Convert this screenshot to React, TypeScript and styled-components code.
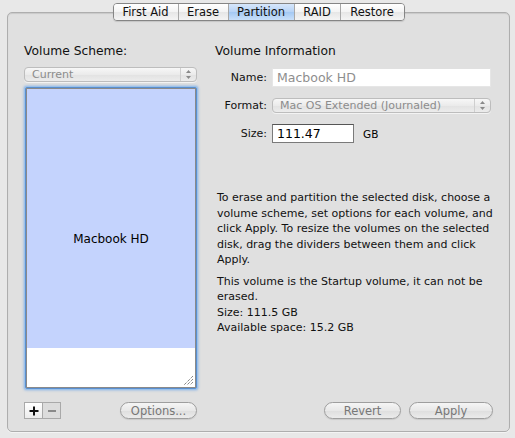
import { createGlobalStyle, styled } from "styled-components";

const GlobalStyle = createGlobalStyle`
    html, body {
        margin: 0;
        padding: 0;
        background: #e8e8e8;
    }
    body {
        font-family: "DejaVu Sans", "Liberation Sans", sans-serif;
        font-size: 11px;
        color: #000;
    }
`;

const Window = styled.div`
    width: 515px;
    height: 438px;
    box-sizing: border-box;
    padding: 3px 5px 0 7px;
    display: flex;
    flex-direction: column;
    background: #e8e8e8;
`;

const TabBar = styled.div`
    display: flex;
    justify-content: center;
    margin: 0 0 -9px 0;
    position: relative;
    z-index: 1;
`;

const Segments = styled.div`
    display: flex;
    height: 16px;
    border: 1px solid #858585;
    border-radius: 4px;
    overflow: hidden;
    box-shadow: 0 1px 1px rgba(0, 0, 0, 0.12);
`;

const Segment = styled.div<{ $active?: boolean; $width: number }>`
    width: ${(p) => p.$width}px;
    display: flex;
    align-items: center;
    justify-content: center;
    font-size: 11.5px;
    line-height: 16px;
    color: #111;
    border-left: 1px solid #a8a8a8;
    background: ${(p) =>
        p.$active
            ? "linear-gradient(#d7e7fb, #b6d3f6 50%, #a3c8f3 51%, #c9e0fa)"
            : "linear-gradient(#ffffff, #f3f3f3 50%, #e6e6e6 51%, #f4f4f4)"};
    &:first-child {
        border-left: none;
    }
`;

const Panel = styled.div`
    width: 503px;
    height: 420px;
    box-sizing: border-box;
    border: 1px solid #aeaeae;
    border-radius: 5px;
    background: #e0e0e0;
    box-shadow: inset 0 1px 1px rgba(0, 0, 0, 0.1), 0 1px 0 #f4f4f4;
    padding: 30px 16px 12px 16px;
    display: flex;
    gap: 18px;
`;

const LeftColumn = styled.div`
    width: 173px;
    flex-shrink: 0;
    display: flex;
    flex-direction: column;
`;

const RightColumn = styled.div`
    flex: 1;
    min-width: 0;
    display: flex;
    flex-direction: column;
`;

const SectionTitle = styled.div`
    font-size: 12.3px;
    line-height: 16px;
    color: #111;
`;

const PopUp = styled.div`
    height: 15px;
    box-sizing: border-box;
    border: 1px solid #bdbdbd;
    border-radius: 4px;
    background: linear-gradient(#f7f7f7, #ebebeb 50%, #e2e2e2 51%, #ececec);
    display: flex;
    align-items: center;
    color: #8c8c8c;
    font-size: 11px;
    box-shadow: 0 1px 0 rgba(255, 255, 255, 0.6);
`;

const PopUpText = styled.span`
    flex: 1;
    padding-left: 7px;
    line-height: 13px;
    white-space: nowrap;
`;

const PopUpArrows = styled.span`
    width: 15px;
    height: 13px;
    border-left: 1px solid #cfcfcf;
    display: flex;
    align-items: center;
    justify-content: center;
`;

const SchemeBox = styled.div`
    margin-top: 5px;
    margin-left: 1px;
    height: 302px;
    box-sizing: border-box;
    border: 1px solid #5a8fcf;
    box-shadow: 0 0 0 1px #9cc2ea, 0 0 2px 2px rgba(120, 170, 230, 0.45);
    border-radius: 2px;
    display: flex;
    flex-direction: column;
    background: #fff;
    position: relative;
`;

const VolumeBlock = styled.div`
    flex: 1;
    background: #c4d3fd;
    border: 1px solid #8a8a8a;
    border-bottom: none;
`;

const VolumeName = styled.div`
    position: absolute;
    inset: 0;
    display: flex;
    align-items: center;
    justify-content: center;
    font-size: 12px;
    padding-top: 2px;
    pointer-events: none;
`;

const FreeBlock = styled.div`
    height: 38px;
    border: 1px solid #8a8a8a;
    border-top: none;
    display: flex;
    justify-content: flex-end;
    align-items: flex-end;
    padding: 0 1px 1px 0;
    background: #fff;
`;

const BottomRow = styled.div<{ $end?: boolean }>`
    margin-top: auto;
    display: flex;
    align-items: center;
    justify-content: ${(p) => (p.$end ? "flex-end" : "flex-start")};
    gap: 8px;
`;

const SquareGroup = styled.div`
    display: flex;
    margin-left: 1px;
`;

const SquareButton = styled.div<{ $dim?: boolean }>`
    width: 19px;
    height: 17px;
    box-sizing: border-box;
    border: 1px solid #a9a9a9;
    margin-left: -1px;
    background: ${(p) => (p.$dim ? "#dcdcdc" : "linear-gradient(#ffffff, #ececec)")};
    display: flex;
    align-items: center;
    justify-content: center;
`;

const PillButton = styled.div<{ $width: number }>`
    width: ${(p) => p.$width}px;
    height: 17px;
    box-sizing: border-box;
    border: 1px solid #9e9e9e;
    border-radius: 9px;
    background: linear-gradient(#f5f5f5, #e8e8e8 50%, #dedede 51%, #ebebeb);
    box-shadow: 0 1px 1px rgba(0, 0, 0, 0.1);
    color: #777;
    font-size: 11.5px;
    display: flex;
    align-items: center;
    justify-content: center;
`;

const OptionsButton = styled(PillButton)`
    margin-left: 51px;
`;

const FormGrid = styled.div`
    margin-top: 9px;
    display: grid;
    grid-template-columns: 52px 1fr;
    column-gap: 5px;
    row-gap: 11px;
    align-items: center;
    margin-right: 2px;
`;

const FieldLabel = styled.div`
    text-align: right;
    font-size: 11px;
    color: #111;
`;

const TextField = styled.div<{ $muted?: boolean; $width?: number }>`
    height: 19px;
    width: ${(p) => (p.$width ? `${p.$width}px` : "auto")};
    box-sizing: border-box;
    background: #fff;
    border: 1px solid ${(p) => (p.$muted ? "#e6e6e6" : "#7a7a7a")};
    border-top-color: ${(p) => (p.$muted ? "#e0e0e0" : "#555")};
    color: ${(p) => (p.$muted ? "#8e8e8e" : "#000")};
    font-size: 12.5px;
    line-height: 17px;
    padding-left: 4px;
`;

const SizeRow = styled.div`
    display: flex;
    align-items: center;
    gap: 9px;
    font-size: 10.5px;
`;

const Description = styled.div`
    margin-top: 47px;
    margin-left: 2px;
    font-size: 11px;
    line-height: 15.5px;
    white-space: nowrap;
    color: #111;
`;

const Paragraph = styled.p`
    margin: 0 0 6px 0;
`;

function Arrows() {
    return (
        <svg width="7" height="11" viewBox="0 0 7 11">
            <path d="M3.5 1 L6 4 L1 4 Z" fill="#8a8a8a" />
            <path d="M3.5 10 L6 7 L1 7 Z" fill="#8a8a8a" />
        </svg>
    );
}

function Grip() {
    return (
        <svg width="12" height="12" viewBox="0 0 12 12">
            <path d="M11 2 L2 11 M11 5 L5 11 M11 8 L8 11" stroke="#555" strokeWidth="1" strokeDasharray="1 1" />
        </svg>
    );
}

const tabs = [
    { label: "First Aid", width: 64 },
    { label: "Erase", width: 49 },
    { label: "Partition", width: 65 },
    { label: "RAID", width: 45 },
    { label: "Restore", width: 63 },
];

export default function App() {
    return (
        <>
            <GlobalStyle />
            <Window>
                <TabBar>
                    <Segments>
                        {tabs.map((t) => (
                            <Segment key={t.label} $width={t.width} $active={t.label === "Partition"}>
                                {t.label}
                            </Segment>
                        ))}
                    </Segments>
                </TabBar>
                <Panel>
                    <LeftColumn>
                        <SectionTitle>Volume Scheme:</SectionTitle>
                        <PopUp style={{ marginTop: 8 }}>
                            <PopUpText>Current</PopUpText>
                            <PopUpArrows><Arrows /></PopUpArrows>
                        </PopUp>
                        <SchemeBox>
                            <VolumeBlock />
                            <FreeBlock><Grip /></FreeBlock>
                            <VolumeName>Macbook HD</VolumeName>
                        </SchemeBox>
                        <BottomRow>
                            <SquareGroup>
                                <SquareButton>
                                    <svg width="10" height="10" viewBox="0 0 10 10">
                                        <path d="M5 0.5 V9.5 M0.5 5 H9.5" stroke="#111" strokeWidth="2" />
                                    </svg>
                                </SquareButton>
                                <SquareButton $dim>
                                    <svg width="10" height="10" viewBox="0 0 10 10">
                                        <path d="M1 5 H9" stroke="#8a8a8a" strokeWidth="2" />
                                    </svg>
                                </SquareButton>
                            </SquareGroup>
                            <OptionsButton $width={80}>Options...</OptionsButton>
                        </BottomRow>
                    </LeftColumn>
                    <RightColumn>
                        <SectionTitle>Volume Information</SectionTitle>
                        <FormGrid>
                            <FieldLabel>Name:</FieldLabel>
                            <TextField $muted>Macbook HD</TextField>
                            <FieldLabel>Format:</FieldLabel>
                            <PopUp>
                                <PopUpText>Mac OS Extended (Journaled)</PopUpText>
                                <PopUpArrows><Arrows /></PopUpArrows>
                            </PopUp>
                            <FieldLabel>Size:</FieldLabel>
                            <SizeRow>
                                <TextField $width={82}>111.47</TextField>
                                <span>GB</span>
                            </SizeRow>
                        </FormGrid>
                        <Description>
                            <Paragraph>
                                To erase and partition the selected disk, choose a<br />
                                volume scheme, set options for each volume, and<br />
                                click Apply. To resize the volumes on the selected<br />
                                disk, drag the dividers between them and click<br />
                                Apply.
                            </Paragraph>
                            <Paragraph>
                                This volume is the Startup volume, it can not be<br />
                                erased.<br />
                                Size: 111.5 GB<br />
                                Available space: 15.2 GB
                            </Paragraph>
                        </Description>
                        <BottomRow $end>
                            <PillButton $width={77}>Revert</PillButton>
                            <PillButton $width={84}>Apply</PillButton>
                        </BottomRow>
                    </RightColumn>
                </Panel>
            </Window>
        </>
    );
}
